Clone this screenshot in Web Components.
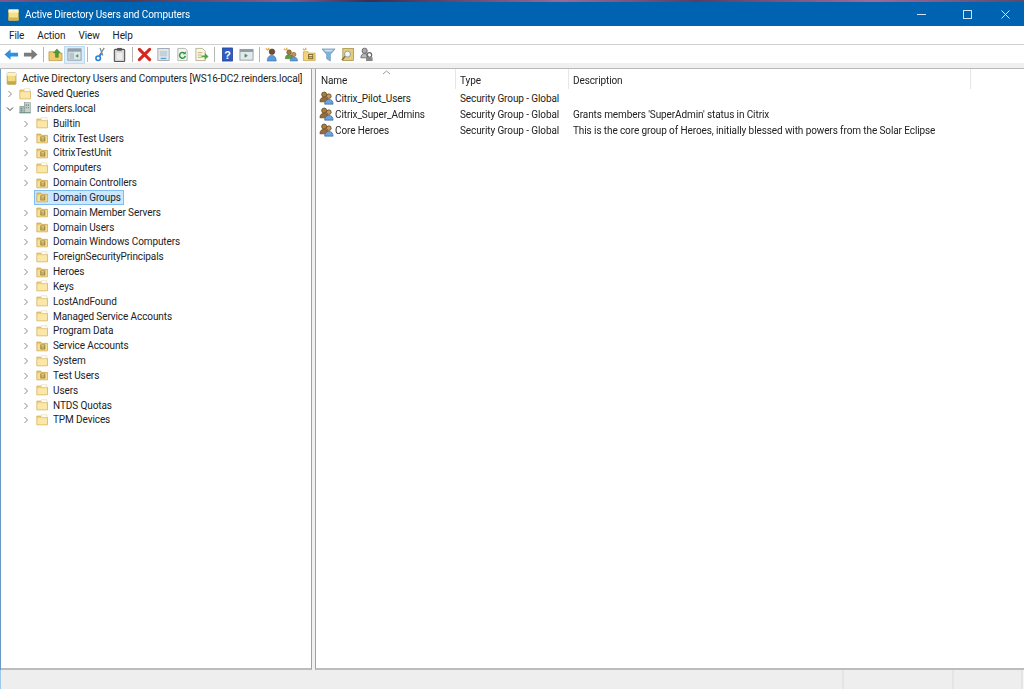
<!DOCTYPE html>
<html lang="en"><head><meta charset="utf-8"><title>Active Directory Users and Computers</title>
<style>
html,body{margin:0;padding:0;height:100%;background:#f0f0f0;overflow:hidden}
body{font:10px Roboto,"Open Sans","Liberation Sans",sans-serif;letter-spacing:-.1px;color:#222}
</style></head><body>
<ad-window>
  <ad-titlebar slot="title">Active Directory Users and Computers</ad-titlebar>
  <ad-menubar slot="menu"><span>File</span><span>Action</span><span>View</span><span>Help</span></ad-menubar>
  <ad-toolbar slot="tools">
    <ad-tool icon="back"></ad-tool><ad-tool icon="forward"></ad-tool><ad-sep></ad-sep>
    <ad-tool icon="up"></ad-tool><ad-tool icon="tree" active></ad-tool><ad-sep></ad-sep>
    <ad-tool icon="cut"></ad-tool><ad-tool icon="paste"></ad-tool><ad-sep></ad-sep>
    <ad-tool icon="del"></ad-tool><ad-tool icon="props"></ad-tool><ad-tool icon="refresh"></ad-tool><ad-tool icon="export"></ad-tool><ad-sep></ad-sep>
    <ad-tool icon="help"></ad-tool><ad-tool icon="console"></ad-tool><ad-sep></ad-sep>
    <ad-tool icon="user"></ad-tool><ad-tool icon="group"></ad-tool><ad-tool icon="newou"></ad-tool><ad-tool icon="filter"></ad-tool><ad-tool icon="find"></ad-tool><ad-tool icon="delegate"></ad-tool>
  </ad-toolbar>
  <ad-tree slot="tree">
    <ad-node level="0" icon="root" arrow="none">Active Directory Users and Computers [WS16-DC2.reinders.local]</ad-node>
    <ad-node level="1" icon="folder">Saved Queries</ad-node>
    <ad-node level="1" icon="domain" arrow="open">reinders.local</ad-node>
    <ad-node level="2" icon="folder">Builtin</ad-node>
    <ad-node level="2" icon="ou">Citrix Test Users</ad-node>
    <ad-node level="2" icon="ou">CitrixTestUnit</ad-node>
    <ad-node level="2" icon="folder">Computers</ad-node>
    <ad-node level="2" icon="ou">Domain Controllers</ad-node>
    <ad-node level="2" icon="ou" arrow="none" selected>Domain Groups</ad-node>
    <ad-node level="2" icon="ou">Domain Member Servers</ad-node>
    <ad-node level="2" icon="ou">Domain Users</ad-node>
    <ad-node level="2" icon="ou">Domain Windows Computers</ad-node>
    <ad-node level="2" icon="folder">ForeignSecurityPrincipals</ad-node>
    <ad-node level="2" icon="ou">Heroes</ad-node>
    <ad-node level="2" icon="folder">Keys</ad-node>
    <ad-node level="2" icon="folder">LostAndFound</ad-node>
    <ad-node level="2" icon="folder">Managed Service Accounts</ad-node>
    <ad-node level="2" icon="folder">Program Data</ad-node>
    <ad-node level="2" icon="ou">Service Accounts</ad-node>
    <ad-node level="2" icon="folder">System</ad-node>
    <ad-node level="2" icon="ou">Test Users</ad-node>
    <ad-node level="2" icon="folder">Users</ad-node>
    <ad-node level="2" icon="folder">NTDS Quotas</ad-node>
    <ad-node level="2" icon="folder">TPM Devices</ad-node>
  </ad-tree>
  <ad-list slot="list">
    <ad-row name="Citrix_Pilot_Users" type="Security Group - Global"></ad-row>
    <ad-row name="Citrix_Super_Admins" type="Security Group - Global" desc="Grants members 'SuperAdmin' status in Citrix"></ad-row>
    <ad-row name="Core Heroes" type="Security Group - Global" desc="This is the core group of Heroes, initially blessed with powers from the Solar Eclipse"></ad-row>
  </ad-list>
  <ad-status slot="status"></ad-status>
</ad-window>
<script>
const ICONS={
folder:`<path d="M1 3.500h4.500l1 1.500H13v8.500H1z" fill="#f3d27a" stroke="#c9a44c" stroke-width=".8"/><path d="M1.600 6h11v7H1.600z" fill="#fbe7a8"/><path d="M6 2h6.500v3H6z" fill="#fff" stroke="#d9c58a" stroke-width=".5"/>`,
ou:`<path d="M1 3.500h4.500l1 1.500H13v8.500H1z" fill="#f0cb6c" stroke="#c39a3f" stroke-width=".8"/><path d="M1.600 6h11v7H1.600z" fill="#f8df95"/><rect x="5" y="6.300" width="5.600" height="5.600" fill="#8a7a38"/><rect x="6" y="7.200" width="3.600" height="1.400" fill="#f7eaa8"/><rect x="6" y="9.500" width="3.600" height="1.400" fill="#e4cf6c"/>`,
root:`<rect x="2.500" y="1" width="10" height="13" rx="1" fill="#f2dc7e" stroke="#a08a3c" stroke-width=".8"/><rect x="2.500" y="1" width="10" height="3.400" fill="#fbf3c8"/><rect x="2.500" y="10.500" width="10" height="3.500" fill="#c9a945"/>`,
domain:`<rect x="1" y="6" width="5" height="7.500" fill="#a9b9b4" stroke="#6d7c78" stroke-width=".5"/><rect x="6" y="2" width="7" height="11.500" fill="#c5d1cc" stroke="#6d7c78" stroke-width=".5"/><path d="M7.500 4h1.400v1.400H7.500zM10 4h1.400v1.400H10zM7.500 7h1.400v1.400H7.500zM10 7h1.400v1.400H10zM2 8h1.300v1.300H2zM2 10.500h1.300v1.300H2z" fill="#4a8a74"/><path d="M.5 13.500h13" stroke="#5f8f80"/>`,
group:`<circle cx="5.500" cy="3.800" r="2.700" fill="#a9813f" stroke="#4a3216" stroke-width=".7"/><path d="M1 11.500c0-3.400 1.800-4.800 4.500-4.800S10 8 10 11.500z" fill="#9c6a34" stroke="#5a3a16" stroke-width=".7"/><circle cx="10.500" cy="5.500" r="2.500" fill="#c89a58" stroke="#4a3216" stroke-width=".7"/><path d="M6 14c0-3.500 1.800-5 4.500-5s4.500 1.500 4.500 5z" fill="#6ea3d8" stroke="#2d5f95" stroke-width=".7"/>`,
back:`<path d="M.5 8l6.500-5.500V6h8v4H7v3.500z" fill="#2f8fe0"/>`,
forward:`<path d="M15.500 8L9 2.500V6H1v4h8v3.500z" fill="#7b7b7b"/>`,
up:`<path d="M1 5h5l1 1.500h8V14.500H1z" fill="#f0cb6c" stroke="#b58e3a" stroke-width=".7"/><path d="M8 11V6H5.800L9.500 2l3.700 4H11v5z" fill="#4f9c30" stroke="#2d6a1c" stroke-width=".4"/>`,
tree:`<rect x="1" y="2" width="14" height="12" fill="#dfe6ec" stroke="#7b8894" stroke-width=".8"/><rect x="1" y="2" width="14" height="3" fill="#8fa0ad"/><rect x="2.500" y="6" width="5" height="7" fill="#b9c4cc"/><path d="M12 7.500l-3 2 3 2z" fill="#3c9a4c"/>`,
cut:`<path d="M12 1L7 9M7.500 1l3 8" stroke="#7b8894" stroke-width="1.300" fill="none"/><circle cx="5.500" cy="12" r="2.400" fill="none" stroke="#2a7fd8" stroke-width="1.700"/><path d="M9 7l-2.500 3.500" stroke="#2a7fd8" stroke-width="1.700"/>`,
paste:`<rect x="2.500" y="2.500" width="11" height="13" rx="1" fill="#d5d5d5" stroke="#555" stroke-width="1.200"/><rect x="5.500" y="1" width="5" height="3" fill="#555"/><rect x="5" y="6" width="6" height="7.500" fill="#eee"/>`,
del:`<path d="M2.500 2.500l11 11M13.500 2.500l-11 11" stroke="#d6261f" stroke-width="3.200" stroke-linecap="round"/>`,
props:`<rect x="2" y="1.500" width="12" height="13" fill="#e6eaed" stroke="#8a949c" stroke-width=".8"/><rect x="4" y="4" width="8" height="6" fill="#c5d0d8"/><rect x="5" y="11.500" width="6" height="1.500" fill="#4ba3e0"/>`,
refresh:`<path d="M3 1.500h8l2 2V14.500H3z" fill="#f4f5f2" stroke="#a0a59c" stroke-width=".8"/><path d="M11 9.500a3.100 3.100 0 1 1-1-3" fill="none" stroke="#2f9a3c" stroke-width="1.600"/><path d="M11.500 4.500v3.300H8.300z" fill="#2f9a3c"/>`,
export:`<path d="M2 1.500h7l3 3V14.500H2z" fill="#faf6e2" stroke="#a8a27c" stroke-width=".8"/><path d="M4 6h5M4 8.500h4M4 11h4" stroke="#b8b082"/><path d="M8 9h3.500V6.500L15.500 10l-4 3.500V11H8z" fill="#4da83c"/>`,
help:`<rect x="2.500" y="1" width="11" height="14" fill="#2c5cc4" stroke="#1a3a88" stroke-width=".7"/><text x="8" y="12.500" font-size="11.500" font-weight="700" text-anchor="middle" fill="#fff" font-family="Liberation Sans">?</text>`,
console:`<rect x="1" y="2.500" width="14" height="11.500" fill="#e4e9ed" stroke="#7f8a94" stroke-width=".8"/><rect x="1" y="2.500" width="14" height="2.800" fill="#8f9ca7"/><path d="M6 7v4.500l3.500-2.300z" fill="#3c9a4c"/>`,
user:`<path d="M2 1.500l2.500 2M5 .8v2.500" stroke="#e8a83a" stroke-width="1.400"/><circle cx="8.500" cy="5" r="3" fill="#6e4e30" stroke="#3e2a14" stroke-width=".5"/><path d="M3.500 15c0-4.200 2-6 4.800-6s4.700 1.800 4.700 6z" fill="#5d9ad8" stroke="#2f6aa5" stroke-width=".6"/>`,
newgroup:`<path d="M1 2l2 1.500M4 .8v2.500" stroke="#e8a83a" stroke-width="1.400"/><circle cx="6.500" cy="5.500" r="2.500" fill="#a77b3a" stroke="#5b3c16" stroke-width=".5"/><path d="M2.500 12.500c0-3 1.500-4.500 4-4.500s4 1.500 4 4.500z" fill="#6b9a3c" stroke="#3c6a20" stroke-width=".5"/><circle cx="11.500" cy="8" r="2.300" fill="#c89850" stroke="#5b3c16" stroke-width=".5"/><path d="M7.500 15c0-3 1.500-4.300 4-4.300s4 1.300 4 4.300z" fill="#5d9ad8" stroke="#2f6aa5" stroke-width=".5"/>`,
newou:`<path d="M1 2l2 1.500M4 .8v2.500" stroke="#e8a83a" stroke-width="1.400"/><path d="M1.500 5h5l1 1.500h6.500V14.500H1.500z" fill="#f3d27a" stroke="#c39a3f" stroke-width=".7"/><rect x="6.500" y="7.500" width="5.500" height="5.500" fill="#7b6a2c"/><rect x="7.500" y="8.500" width="3.500" height="1.300" fill="#f3e39c"/><rect x="7.500" y="10.700" width="3.500" height="1.300" fill="#d9c15c"/>`,
filter:`<path d="M1 2h14L10 8v7L6 12.500V8z" fill="#7fb2d8" stroke="#5b8cb0" stroke-width=".6"/><path d="M3 2.800h10l-2 2H5z" fill="#cfe3f0"/>`,
find:`<rect x="3" y="1.500" width="11.500" height="13" fill="#e4cc78" stroke="#9a8338" stroke-width=".7"/><circle cx="8" cy="7.500" r="3.200" fill="#f4f6f4" stroke="#8c9aa0" stroke-width="1"/><path d="M5.500 10l-3.500 4" stroke="#7d6a2c" stroke-width="1.600"/>`,
delegate:`<circle cx="6" cy="4" r="2.800" fill="#aaa" stroke="#555" stroke-width=".8"/><path d="M2 11.500c0-3 1.800-4.500 4-4.500s4 1.500 4 4.500z" fill="#bbb" stroke="#555" stroke-width=".8"/><circle cx="11" cy="8.500" r="2.500" fill="none" stroke="#666" stroke-width="1.300"/><rect x="7.500" y="11" width="7" height="4" fill="#888"/>`
};
const svg=(n,s=16,v=16)=>`<svg width="${s}" height="${s}" viewBox="0 0 ${v} ${v}" style="display:block">${ICONS[n]||''}</svg>`;
const def=(tag,html)=>{customElements.define(tag,class extends HTMLElement{
  constructor(){super();this.attachShadow({mode:'open'})}
  connectedCallback(){this.shadowRoot.innerHTML=typeof html==='function'?html(this):html}
})};
def('ad-window',`<style>
:host{display:grid;grid-template-rows:2px 24px 18px 19px 6px 1fr 19px;height:689px;width:1024px;box-sizing:border-box;background:#f0f0f0;filter:blur(.3px)}
.top{background:linear-gradient(90deg,#7a5a8a,#4a3a5a 12%,#8a5a88 28%,#3e2e4a 36%,#9a6a96 55%,#5a3e62 68%,#a06a98 85%,#5a4a6a)}
.gap{background:#f0f0f0;border-bottom:1px solid #b9b9b9;box-sizing:border-box}
.panes{display:grid;grid-template-columns:311px 1fr;gap:3px;min-height:0;border-left:1px solid #6a9bc9;background:#f0f0f0}
::slotted([slot=tools]){border-top:1px solid #d0d0d0}
</style><div class="top"></div><slot name="title"></slot><slot name="menu"></slot><slot name="tools"></slot><div class="gap"></div><div class="panes"><slot name="tree"></slot><slot name="list"></slot></div><slot name="status"></slot>`);
def('ad-titlebar',e=>`<style>
:host{display:flex;align-items:center;background:#0063b1;color:#fff;font-size:10px;padding-left:8px;position:relative}
.t{margin-left:6px}
.c{margin-left:auto;display:flex}
.c div{width:46px;height:24px;display:flex;align-items:center;justify-content:center}
.i{margin-top:1px}
</style><div class="i"><svg width="11" height="12" viewBox="0 0 11 12" style="display:block"><rect x=".5" y=".5" width="10" height="11" rx="1" fill="#f2e08a" stroke="#b9a24a" stroke-width=".6"/><rect x=".5" y=".5" width="10" height="3" fill="#fbf6d0"/><rect x=".5" y="8.500" width="10" height="3" fill="#d4b44e"/></svg></div><div class="t"><slot></slot></div>
<div class="c"><div><svg width="9" height="9" viewBox="0 0 9 9"><path d="M0 4.500h9" stroke="#cfe3f5" stroke-width="1"/></svg></div><div><svg width="9" height="9" viewBox="0 0 9 9"><rect x=".5" y=".5" width="8" height="8" fill="none" stroke="#cfe3f5" stroke-width="1"/></svg></div><div style="width:35px;justify-content:flex-start;padding-left:11px;box-sizing:border-box"><svg width="9" height="9" viewBox="0 0 9 9"><path d="M.5.500l8 8M8.500.500l-8 8" stroke="#cfe3f5" stroke-width="1"/></svg></div></div>`);
def('ad-menubar',`<style>
:host{display:flex;align-items:center;background:#fff;padding-left:9px;gap:13px;color:#222}
::slotted(span){display:block}
</style><slot></slot>`);
def('ad-toolbar',`<style>:host{display:flex;align-items:center;background:#fff;padding:1px 0 0 1.500px;box-sizing:border-box}</style><slot></slot>`);
def('ad-tool',e=>`<style>
:host{display:flex;width:19px;height:18px;align-items:center;justify-content:center;flex:none;position:relative}
:host([active])::before{content:"";position:absolute;inset:0 -1px;background:#dcecf9;border:1px solid #bcdcf4;box-sizing:border-box}
svg{position:relative}
</style>${svg(e.getAttribute('icon')==='group'?'newgroup':e.getAttribute('icon'),15)}`);
def('ad-sep',`<style>:host{display:block;width:6.500px;height:15px;flex:none;position:relative}
:host::after{content:"";position:absolute;left:3px;top:0;bottom:0;width:1px;background:#b5b5b5}</style>`);
def('ad-tree',`<style>:host{display:block;background:#fff;border:1px solid #a0a0a0;border-width:0 1px 2px 0;border-bottom-color:#bcbcbc;padding-top:2.400px;overflow:hidden;box-sizing:border-box}</style><slot></slot>`);
def('ad-node',e=>{
 const l=+e.getAttribute('level'),a=e.getAttribute('arrow'),sel=e.hasAttribute('selected');
 const arrow=a==='none'?'':a==='open'
  ?`<svg width="8" height="8" viewBox="0 0 8 8"><path d="M1 2.500l3 3 3-3" fill="none" stroke="#404040" stroke-width="1"/></svg>`
  :`<svg width="8" height="8" viewBox="0 0 8 8"><path d="M2.500 1l3 3-3 3" fill="none" stroke="#8a8a8a" stroke-width="1"/></svg>`;
 return `<style>
:host{display:flex;align-items:center;height:14.830px;white-space:nowrap;padding-left:${l===0?2:l===1?5:21}px;box-sizing:border-box}
.a{width:${l===0?0:10}px;height:8px;flex:none;display:flex;margin-top:1px}
.b{display:flex;align-items:center;height:15px;box-sizing:border-box;padding:0 2px 0 1px;border:1px solid transparent;margin-left:${l===2?2:l===1?1:0}px;gap:${l===2?3:l===1?4:3}px;${sel?'background:#cce8ff;border-color:#7dbdf0;':''}}
.i{flex:none}
</style><span class="a">${arrow}</span><span class="b"><span class="i">${svg(e.getAttribute('icon'),14)}</span><span><slot></slot></span></span>`});
def('ad-list',`<style>
:host{display:block;background:#fff;border:solid #bcbcbc;border-width:0 0 2px 1px;border-left-color:#a0a0a0;box-sizing:border-box;overflow:hidden;white-space:nowrap}
.h{display:grid;grid-template-columns:140px 113px 402px;height:21px;position:relative}
.h div{padding-left:5px;border-right:1px solid #e6e6e6;line-height:23px;height:20px;box-sizing:border-box}
.h div+div{padding-left:4px}
.s{position:absolute;left:66px;top:1px}
</style><div class="h"><div>Name</div><div>Type</div><div>Description</div><svg class="s" width="9" height="5" viewBox="0 0 9 5"><path d="M1 4l3.500-3L8 4" fill="none" stroke="#9a9a9a"/></svg></div><div><slot></slot></div>`);
def('ad-row',e=>`<style>
:host{display:grid;grid-template-columns:140px 113px 1fr;height:16px;align-items:center}
.n{display:flex;align-items:center;gap:1px;padding-left:3px}
.c{padding-left:4px}
</style><div class="n">${svg('group',15)}<span>${e.getAttribute('name')}</span></div><div class="c">${e.getAttribute('type')}</div><div class="c">${e.getAttribute('desc')||''}</div>`);
def('ad-status',`<style>
:host{display:grid;grid-template-columns:843px 110px 69px 2px;background:#eeeeee;border-left:1px solid #9cc8ee;box-sizing:border-box}
div{border-right:2px solid #e4e4e4}
div:last-child{border:0;background:#f7f7f7}
</style><div></div><div></div><div></div><div></div>`);
</script>
</body></html>
